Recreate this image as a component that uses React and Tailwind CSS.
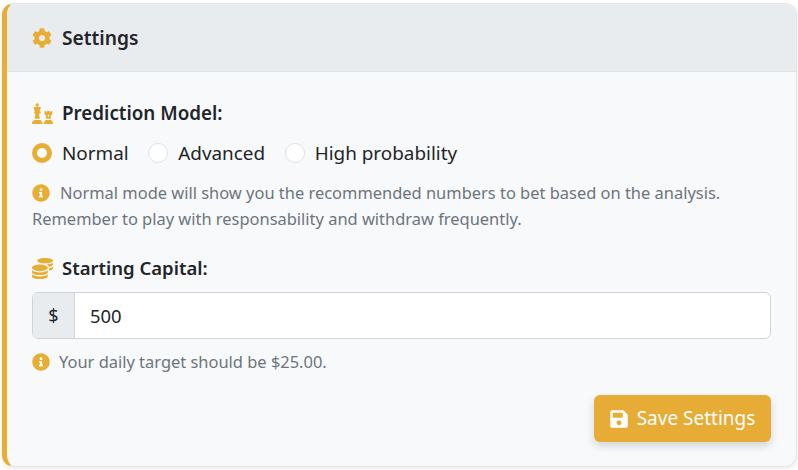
import React from "react";
import { FaCog, FaChess, FaCoins, FaInfoCircle, FaSave } from "react-icons/fa";

function Radio({ checked, label }) {
  return (
    <label className="flex items-center">
      <span
        className={
          checked
            ? "w-5 h-5 rounded-full bg-white border-[5px] border-[#e8ad33]"
            : "w-5 h-5 rounded-full bg-white border border-[#dee2e6]"
        }
      />
      <span className="ml-[10px] text-[18.9px] leading-[28px] text-[#212529]">{label}</span>
    </label>
  );
}

export default function App() {
  return (
    <div className="w-[798px] h-[470px] bg-white pt-[3px] pl-[2px] font-['Noto_Sans','Open_Sans',sans-serif]">
      <div className="w-[795px] h-[464px] rounded-xl border border-[#e3e5e8] border-l-[5px] border-l-[#e8ad33] bg-[#f8f9fa] shadow-[0_2px_6px_rgba(0,0,0,0.08)] overflow-hidden">
        <div className="h-[68px] bg-[#e9ecef] border-b border-[#dee2e6] flex items-center pl-[25px] pt-[1px]">
          <FaCog className="w-5 h-5 text-[#e8ad33]" />
          <h5 className="ml-[10px] text-[19.2px] font-semibold text-[#212529]">Settings</h5>
        </div>
        <div className="px-[25px] pt-[27px]">
          <div className="flex items-center h-[28px]">
            <FaChess className="w-[21px] h-[21px] text-[#e8ad33]" />
            <span className="ml-[9px] text-[18.8px] font-semibold text-[#212529]">Prediction Model:</span>
          </div>
          <div className="flex items-center gap-[19.5px] mt-[12px] h-[28px]">
            <Radio checked label="Normal" />
            <Radio label="Advanced" />
            <Radio label="High probability" />
          </div>
          <p className="mt-[13px] text-[16.45px] leading-[26px] text-[#6c757d]">
            <FaInfoCircle className="inline w-[18px] h-[18px] text-[#e8ad33] mr-[10px] align-[-3px]" />
            Normal mode will show you the recommended numbers to bet based on the analysis.
            <br />
            Remember to play with responsability and withdraw frequently.
          </p>
          <div className="flex items-center h-[28px] mt-[22px]">
            <FaCoins className="w-[21px] h-[21px] text-[#e8ad33]" />
            <span className="ml-[9px] text-[18.5px] font-semibold text-[#212529]">Starting Capital:</span>
          </div>
          <div className="flex mt-[10px] h-[47px] w-[739px] border border-[#ced4da] rounded-md overflow-hidden bg-white">
            <div className="w-[42px] bg-[#e9ecef] border-r border-[#ced4da] flex items-center justify-center text-[18px] text-[#212529]">$</div>
            <div className="flex-1 flex items-center pl-[15px] pt-[1px] text-[18.4px] text-[#212529]">500</div>
          </div>
          <p className="mt-[10px] text-[16.45px] leading-[26px] text-[#6c757d] flex items-center">
            <FaInfoCircle className="w-[18px] h-[18px] text-[#e8ad33] mr-[9px]" />
            Your daily target should be $25.00.
          </p>
          <div className="flex justify-end mt-[20px] w-[739px]">
            <button className="h-[47px] w-[177px] rounded-md bg-[#e6ac35] text-white text-[19px] flex items-center justify-center shadow-[0_4px_8px_rgba(0,0,0,0.15)]">
              <FaSave className="w-[18px] h-5 mr-[9px]" />
              Save Settings
            </button>
          </div>
        </div>
      </div>
    </div>
  );
}
